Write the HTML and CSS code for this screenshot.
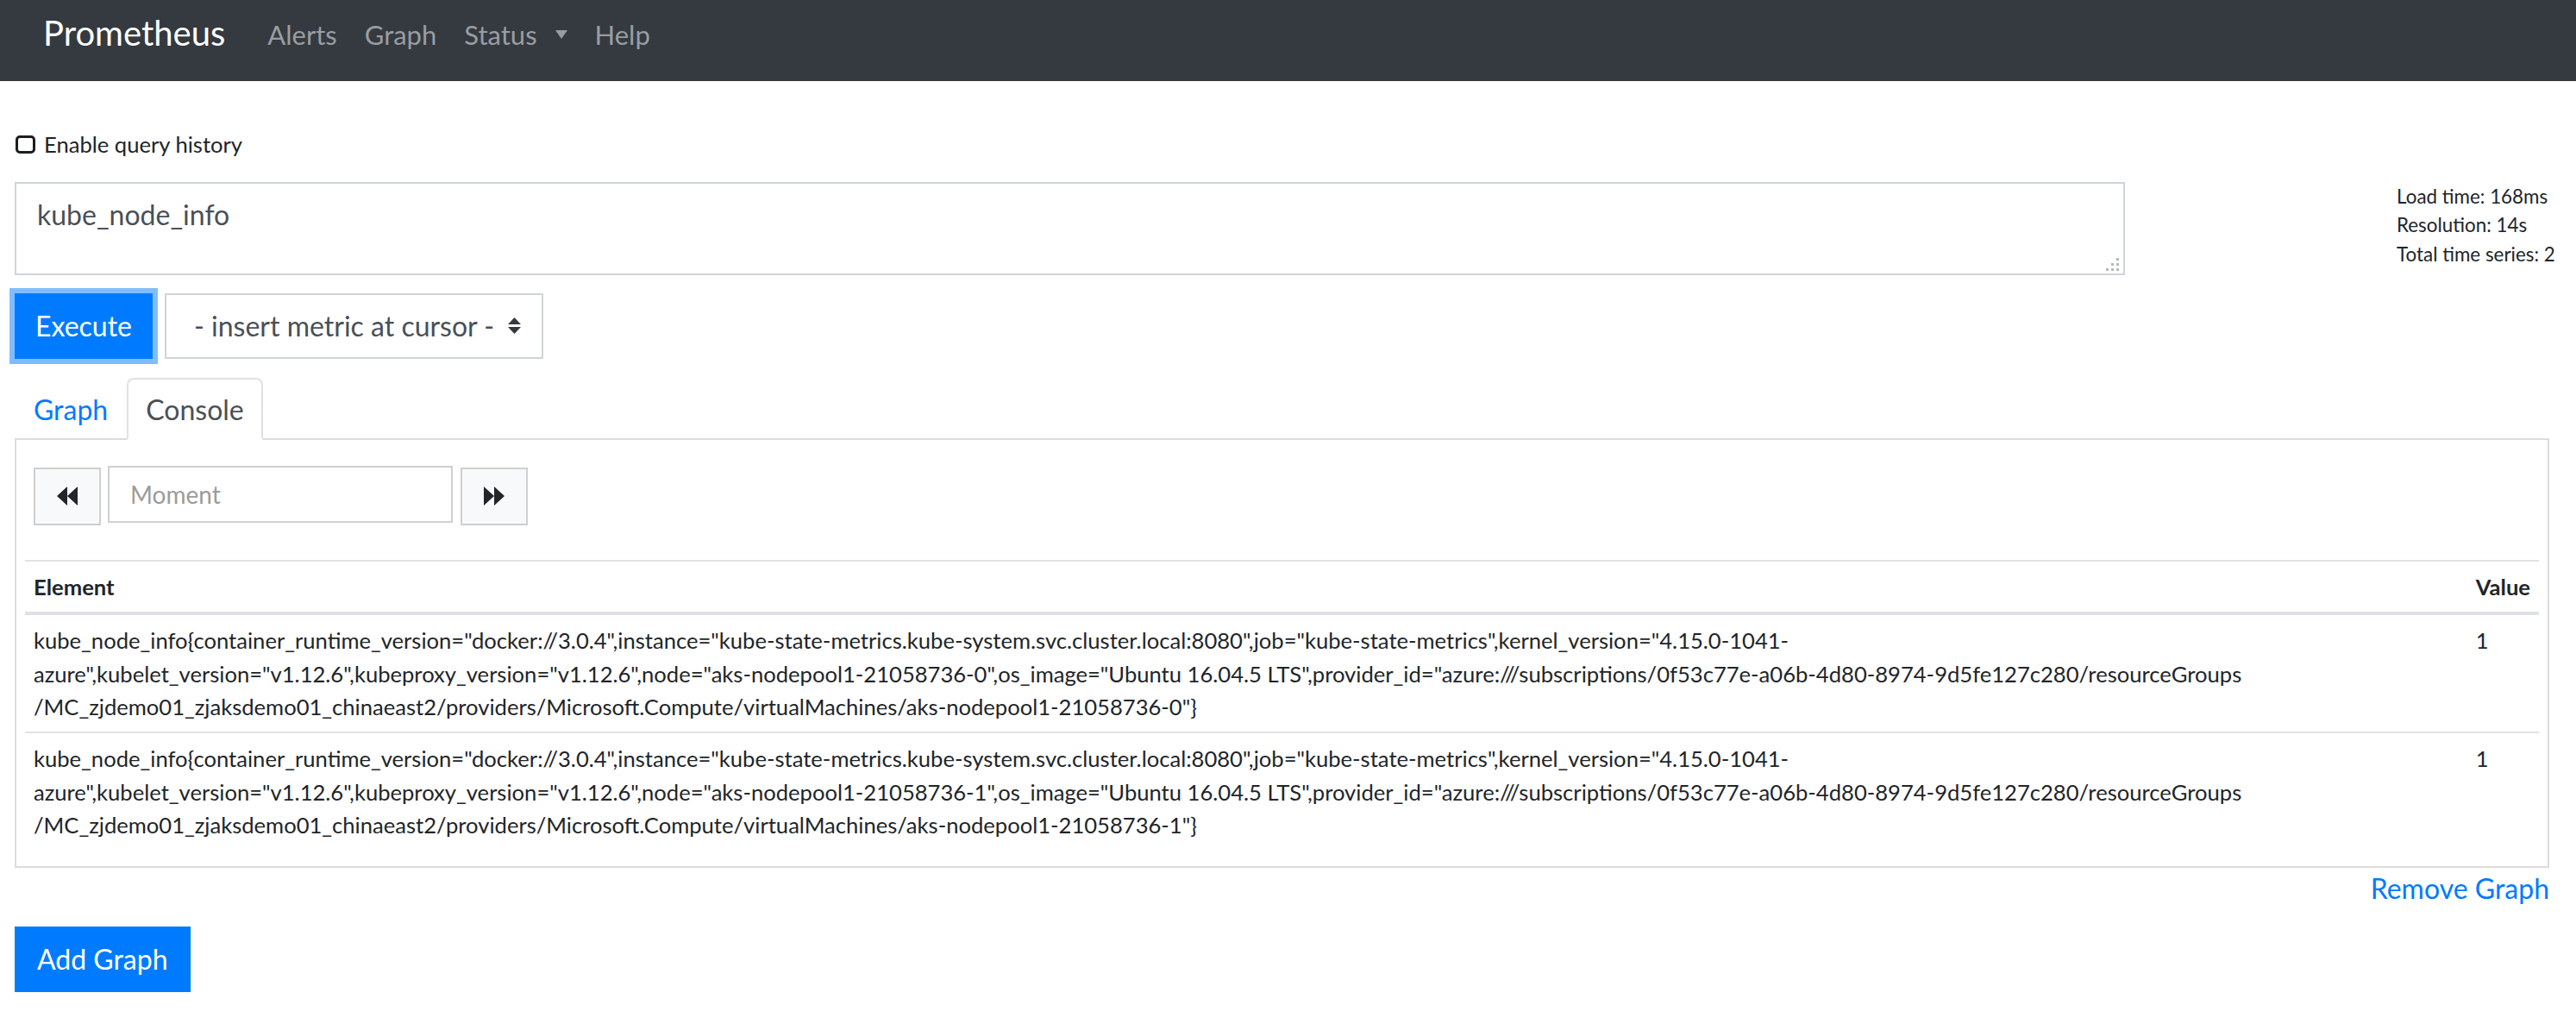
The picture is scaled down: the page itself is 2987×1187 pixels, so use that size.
FILE: index.html
```html
<!DOCTYPE html>
<html lang="en">
<head>
<meta charset="utf-8">
<title>Prometheus Time Series Collection and Processing Server</title>
<link rel="stylesheet" href="styles.css">
</head>
<body>
<nav class="navbar">
  <a class="brand" href="#">Prometheus</a>
  <ul class="nav">
    <li><a href="#">Alerts</a></li>
    <li><a href="#">Graph</a></li>
    <li><a href="#">Status<span class="caret"></span></a></li>
    <li><a href="#">Help</a></li>
  </ul>
</nav>

<main class="container">
  <label class="history">
    <input type="checkbox" class="check">
    <span>Enable query history</span>
  </label>

  <div class="query-row">
    <div class="expr-wrap">
      <textarea class="expr" rows="2">kube_node_info</textarea>
      <svg class="grip" width="15" height="15" viewBox="0 0 15 15">
        <rect x="12" y="0" width="3" height="3"/>
        <rect x="6" y="6" width="3" height="3"/>
        <rect x="12" y="6" width="3" height="3"/>
        <rect x="0" y="12" width="3" height="3"/>
        <rect x="6" y="12" width="3" height="3"/>
        <rect x="12" y="12" width="3" height="3"/>
      </svg>
    </div>
    <div class="eval-stats">
      <div>Load time: 168ms</div>
      <div>Resolution: 14s</div>
      <div>Total time series: 2</div>
    </div>
  </div>

  <div class="exec-row">
    <button class="btn btn-primary focused execute">Execute</button>
    <div class="metric-select">
      <span>- insert metric at cursor -</span>
      <svg class="updown" width="17" height="21" viewBox="0 0 17 21">
        <path d="M1 9 L8.5 1 L16 9 Z"/>
        <path d="M1 12 L16 12 L8.5 20 Z"/>
      </svg>
    </div>
  </div>

  <ul class="tabs">
    <li><a class="tab" href="#">Graph</a></li>
    <li><a class="tab active" href="#">Console</a></li>
  </ul>

  <section class="panel">
    <div class="moment-row">
      <button class="step-btn" aria-label="back">
        <svg width="24" height="22" viewBox="0 0 24 22"><path d="M0 11 L12 0 L12 22 Z M12 11 L24 0 L24 22 Z"/></svg>
      </button>
      <input class="moment" type="text" placeholder="Moment">
      <button class="step-btn next" aria-label="forward">
        <svg width="24" height="22" viewBox="0 0 24 22"><path d="M24 11 L12 0 L12 22 Z M12 11 L0 0 L0 22 Z"/></svg>
      </button>
    </div>

    <table class="results">
      <thead>
        <tr><th>Element</th><th class="value">Value</th></tr>
      </thead>
      <tbody>
        <tr>
          <td class="element">kube_node_info{container_runtime_version="docker://3.0.4",instance="kube-state-metrics.kube-system.svc.cluster.local:8080",job="kube-state-metrics",kernel_version="4.15.0-1041-<br>azure",kubelet_version="v1.12.6",kubeproxy_version="v1.12.6",node="aks-nodepool1-21058736-0",os_image="Ubuntu 16.04.5 LTS",provider_id="azure:///subscriptions/0f53c77e-a06b-4d80-8974-9d5fe127c280/resourceGroups<br>/MC_zjdemo01_zjaksdemo01_chinaeast2/providers/Microsoft.Compute/virtualMachines/aks-nodepool1-21058736-0"}</td>
          <td class="value">1</td>
        </tr>
        <tr>
          <td class="element">kube_node_info{container_runtime_version="docker://3.0.4",instance="kube-state-metrics.kube-system.svc.cluster.local:8080",job="kube-state-metrics",kernel_version="4.15.0-1041-<br>azure",kubelet_version="v1.12.6",kubeproxy_version="v1.12.6",node="aks-nodepool1-21058736-1",os_image="Ubuntu 16.04.5 LTS",provider_id="azure:///subscriptions/0f53c77e-a06b-4d80-8974-9d5fe127c280/resourceGroups<br>/MC_zjdemo01_zjaksdemo01_chinaeast2/providers/Microsoft.Compute/virtualMachines/aks-nodepool1-21058736-1"}</td>
          <td class="value">1</td>
        </tr>
      </tbody>
    </table>
  </section>

  <div class="remove-row"><a href="#" class="remove">Remove Graph</a></div>

  <button class="btn btn-primary add">Add Graph</button>
</main>
</body>
</html>
```

FILE: styles.css
```css
* { box-sizing: border-box; }
html, body { margin: 0; padding: 0; }
body {
  font-family: Lato, "Segoe UI", "Noto Sans", sans-serif;
  font-size: 32px;
  line-height: 1.5;
  color: #212529;
  background: #fff;
}

/* navbar */
.navbar {
  height: 94px;
  background: #343a40;
  display: flex;
  align-items: flex-start;
  padding-left: 50px;
}
.brand {
  font-size: 40px;
  line-height: 60px;
  margin-top: 8px;
  margin-right: 33px;
  color: #fff;
  text-decoration: none;
}
.nav {
  display: flex;
  list-style: none;
  margin: 16px 0 0;
  padding: 0;
}
.nav a {
  display: flex;
  align-items: center;
  padding: 0 16px;
  font-size: 31px;
  line-height: 48px;
  color: #9a9da0;
  text-decoration: none;
}
.caret {
  width: 0;
  height: 0;
  margin-left: 21px;
  border-left: 7.5px solid transparent;
  border-right: 7.5px solid transparent;
  border-top: 10px solid #9a9da0;
}

/* main */
.container {
  padding: 0 31px 0 17px;
}
.history {
  display: flex;
  align-items: center;
  margin-top: 53px;
  font-size: 25.6px;
  line-height: 40.8px;
}
.check {
  appearance: none;
  -webkit-appearance: none;
  margin: 0 10px 0 1px;
  width: 23px;
  height: 21px;
  border: 3.5px solid #1b1e21;
  border-radius: 5px;
  background: #fff;
}

.query-row {
  display: flex;
  align-items: flex-start;
  margin-top: 23px;
}
.expr-wrap {
  position: relative;
  flex: 0 0 2447px;
}
.expr {
  display: block;
  width: 100%;
  height: 108px;
  padding: 12px 24px;
  border: 2px solid #ced4da;
  border-radius: 0;
  font-family: inherit;
  font-size: 32px;
  line-height: 48px;
  color: #495057;
  resize: none;
  outline: none;
  overflow: hidden;
}
.grip {
  position: absolute;
  right: 7px;
  bottom: 5px;
  fill: #b9b9b9;
}
.eval-stats {
  margin-left: 315px;
  font-size: 22.4px;
  line-height: 33.6px;
  white-space: nowrap;
}

.exec-row {
  display: flex;
  align-items: flex-start;
  margin-top: 21px;
}
.btn {
  font-family: inherit;
  font-size: 32px;
  line-height: 48px;
  padding: 12px 24px;
  border: 2px solid transparent;
  border-radius: 0;
  cursor: pointer;
}
.btn-primary {
  background: #007bff;
  border-color: #007bff;
  color: #fff;
}
.execute {
  width: 160px;
  padding-left: 0;
  padding-right: 0;
  text-align: center;
}
.focused {
  box-shadow: 0 0 0 6px #80bdff;
}
.metric-select {
  display: flex;
  align-items: center;
  width: 439px;
  height: 76px;
  margin-left: 14px;
  padding-left: 32px;
  border: 2px solid #ced4da;
  color: #495057;
  background: #fff;
}
.updown {
  margin-left: 15px;
  fill: #343a40;
}

/* tabs */
.tabs {
  display: flex;
  list-style: none;
  margin: 22px 0 0;
  padding: 0;
}
.tab {
  display: block;
  padding: 11px 20px 9px;
  line-height: 48px;
  border: 2px solid transparent;
  border-top-left-radius: 8px;
  border-top-right-radius: 8px;
  margin-bottom: -2px;
  color: #007bff;
  text-decoration: none;
  position: relative;
}
.tab.active {
  color: #495057;
  background: #fff;
  border-color: #dee2e6 #dee2e6 #fff;
}

.panel {
  border: 2px solid #dcdcdc;
  padding: 10px;
  background: #fff;
}
.moment-row {
  display: flex;
  align-items: flex-start;
  padding: 20px 10px 0;
}
.step-btn {
  width: 78px;
  height: 67px;
  margin-top: 2px;
  display: flex;
  align-items: center;
  justify-content: center;
  background: #f8f9fa;
  border: 2px solid #cfcfcf;
  border-radius: 0;
  padding: 0;
  fill: #212529;
}
.step-btn.next { margin-left: 9px; }
.moment {
  width: 400px;
  height: 66px;
  margin-left: 8px;
  padding: 10px 24px;
  border: 2px solid #cfcfcf;
  font-family: inherit;
  font-size: 28px;
  line-height: 42px;
  color: #495057;
  outline: none;
}
.moment::placeholder { color: #9b9b9b; }

.results {
  width: 100%;
  margin-top: 40px;
  margin-bottom: 8px;
  border-collapse: separate;
  border-spacing: 0;
  font-size: 25.6px;
  line-height: 38.4px;
}
.results th {
  text-align: left;
  font-weight: 700;
  padding: 10px;
  border-top: 2px solid #dee2e6;
  border-bottom: 4px solid #dee2e6;
}
.results td {
  padding: 10px;
  vertical-align: top;
  border-top: 2px solid #dee2e6;
}
.results tbody tr:first-child td { border-top: 0; }
.results .element { white-space: nowrap; }
.results .value { width: 1%; white-space: nowrap; }

.remove-row {
  text-align: right;
  line-height: 48px;
}
.remove {
  color: #007bff;
  text-decoration: none;
}
.add {
  display: block;
  margin-top: 20px;
}
```
